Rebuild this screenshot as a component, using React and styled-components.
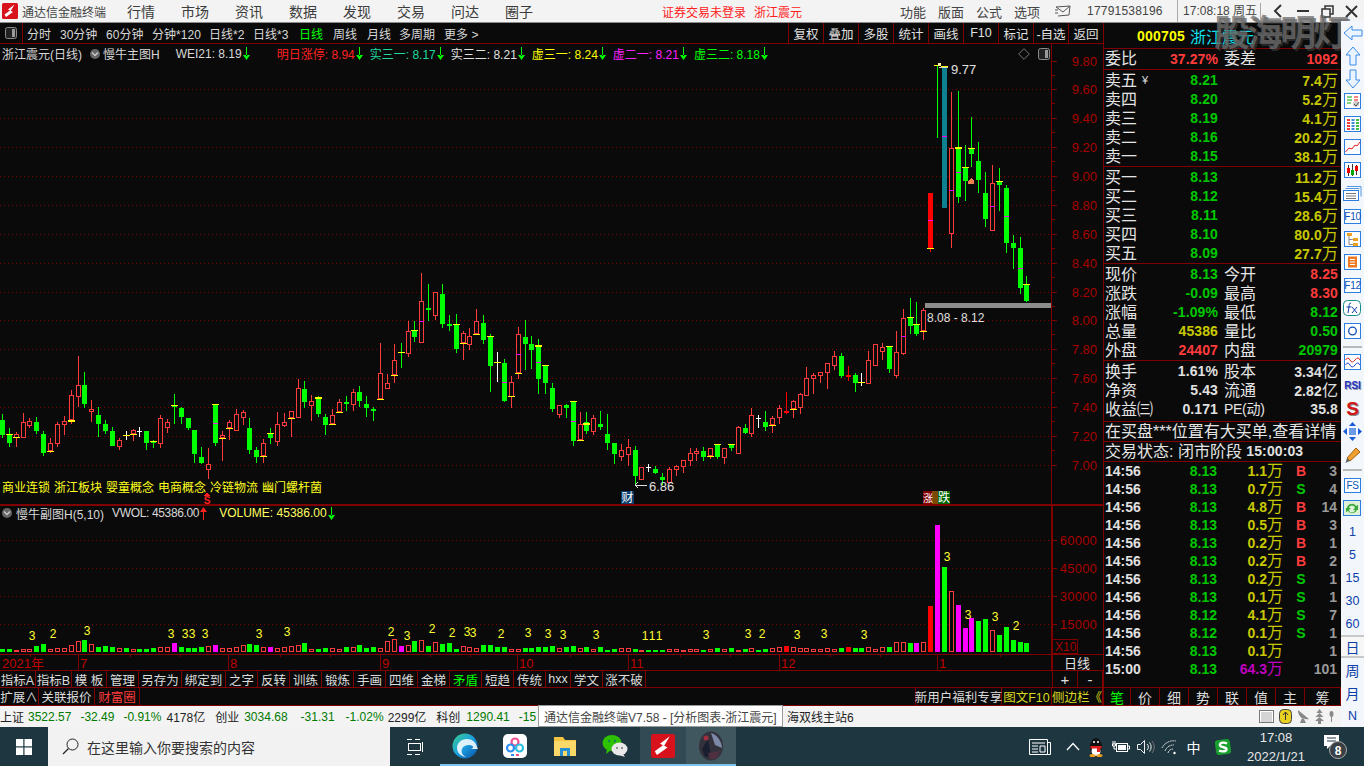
import React from 'react';
import styled, { createGlobalStyle } from 'styled-components';

const FONT = `"Liberation Sans","Noto Sans CJK SC",sans-serif`;
const LINE = '#800000';
const BG = '#0a0a0a';
const RED = '#ff3c3c';
const GREEN = '#00c800';
const OLIVE = '#c8c800';
const LIME = '#00ff00';

const Global = createGlobalStyle`
  html, body { margin: 0; padding: 0; background: ${BG}; overflow: hidden; }
  * { box-sizing: border-box; }
`;

/* ---------- chart data, read off the picture: [x, wickTop, wickBot, bodyTop, bodyBot, kind, yellow, magenta, thick] ---------- */
const partA = [
  [7,447,519,465,510,'g'],[28,489,545,506,534,'g',506],[49,501,546,508,518,'r',517],[70,444,518,472,518,'r'],
  [88,459,490,469,483,'r'],[109,456,507,471,498,'g'],[130,498,573,507,564,'g'],[151,519,564,534,559,'r',559],
  [172,472,546,477,537,'r'],[193,453,510,469,479,'r'],[214,375,477,391,465,'r',465,0,2],[235,273,426,361,395,'r'],
  [253,321,429,360,417,'g'],[274,405,471,432,441,'r'],[295,426,516,450,477,'g'],[316,465,507,477,498,'g'],
  [337,486,543,498,543,'g'],[358,519,555,525,545,'r'],[379,498,525,511,511,'w',511],[400,492,528,496,508,'r',508],
  [418,486,516,498,498,'w'],[439,498,555,498,534,'g'],[460,525,549,528,533,'g',528],[481,450,549,460,537,'r'],
  [502,462,504,472,488,'r'],[523,387,477,421,425,'g',421],[544,426,477,429,456,'g'],[565,459,495,459,489,'g'],
  [583,495,594,495,567,'g'],[604,546,597,576,594,'g'],[625,549,642,598,614,'r'],[646,418,543,418,534,'g',418,475],
  [667,498,588,511,520,'r',520],[688,465,525,472,490,'r',490],[709,432,498,447,497,'r'],[730,435,480,442,458,'r'],
  [748,459,567,489,555,'g'],[769,546,594,555,576,'g'],[790,522,594,534,574,'r',574],[811,489,537,505,519,'g',505],
  [832,441,543,478,530,'r'],[853,444,486,472,483,'r'],[874,438,516,439,460,'r',460],[895,342,459,370,458,'r'],
  [913,348,429,372,411,'g'],[934,390,468,409,423,'r'],[955,393,456,396,447,'g',396,0,2],[976,447,510,456,480,'g'],
  [997,432,480,450,478,'r',478],[1018,402,444,412,442,'r',442],[1039,393,438,411,417,'g'],[1060,372,438,381,419,'r'],
  [1078,363,426,381,408,'g'],[1099,393,456,417,429,'g'],[1120,426,468,432,438,'g'],[1141,234,405,325,403,'r',403],
  [1162,327,372,355,371,'r'],[1183,237,354,286,331,'r',331],[1204,234,309,261,263,'g',262],[1225,168,276,199,266,'r'],
  [1243,168,231,196,216,'g',196],[1264,24,234,109,233,'r',0,169],[1285,57,168,129,135,'g'],[1306,82,165,82,152,'r'],
  [1327,57,189,87,177,'g'],[1348,150,198,177,183,'g'],[1369,147,264,178,252,'g',178],[1390,198,285,205,235,'r',235],
];
const partB = [
  [28,189,255,214,240,'r'],[49,132,210,168,208,'r',208],[70,150,237,174,225,'g'],[91,207,381,214,303,'g',214],
  [112,261,351,292,292,'w',292],[133,282,411,294,408,'g',0,352],[154,333,429,351,395,'r',394],[175,186,342,208,325,'r',325,268],
  [196,165,315,216,237,'g'],[214,213,312,237,255,'g'],[235,222,387,240,342,'g',240,292,2],[256,300,387,301,354,'g',301],
  [277,354,441,369,432,'g'],[298,420,459,421,450,'r'],[319,417,459,420,429,'g'],[340,409,543,409,528,'g',409,468],
  [361,441,528,478,526,'r',526],[379,441,507,472,498,'g',473,0,2],[400,450,510,460,500,'r'],[421,438,495,477,486,'g'],
  [442,447,555,507,534,'g'],[463,534,597,534,567,'g'],[484,537,588,555,576,'r'],[505,522,603,546,570,'r'],
  [526,543,660,555,633,'g'],[544,606,645,607,644,'r'],[565,597,621,607,607,'w'],[586,603,627,612,624,'g'],
  [607,624,660,636,645,'g'],[628,606,654,613,653,'r'],[649,600,633,604,614,'r'],[670,585,624,586,606,'r'],
  [691,549,603,564,587,'r'],[709,549,588,559,567,'r'],[730,546,588,558,576,'g'],[751,549,582,550,574,'r',574],
  [772,537,582,540,576,'g',538],[793,549,597,550,578,'r'],[814,537,558,540,549,'g',538],[835,484,567,487,566,'r'],
  [856,477,507,489,504,'g'],[874,430,516,451,506,'r'],[895,450,489,460,460,'w'],[916,438,498,471,486,'g'],
  [937,453,504,460,481,'r',481],[958,420,477,429,460,'r'],[979,381,447,438,443,'R'],[1000,405,459,409,433,'r',433],
  [1021,384,447,388,428,'r'],[1039,306,393,340,392,'r'],[1060,324,387,331,341,'r'],[1081,321,354,322,334,'r'],
  [1102,294,372,295,325,'r'],[1123,258,315,274,302,'r'],[1144,264,339,273,333,'g'],[1165,303,348,330,335,'R'],
  [1186,324,381,330,354,'g'],[1204,324,363,350,350,'w',350],[1225,258,357,286,356,'r'],[1246,237,303,238,302,'r'],
  [1267,234,285,247,262,'r'],[1288,243,324,245,312,'g',244],[1309,198,339,262,332,'r'],[1330,132,270,160,266,'r',0,214],
  [1351,99,207,157,183,'g',157],[1369,111,213,176,207,'g',176],[1390,129,225,136,199,'r',199],
];
const partC = [
  [151,430,605,430,594,'R',594,511],[172,45,264,45,46,'g',45],[193,50,474,50,474,'T',48,259,2],[214,126,594,295,551,'r',0,421],
  [235,123,459,290,441,'g',290,367,2],[256,285,453,352,393,'g',352],[274,201,351,295,312,'g',295],[295,276,429,333,390,'g'],
  [316,366,531,429,507,'g'],[337,345,543,400,542,'r',0,469],[358,355,483,394,405,'g',394],[379,405,609,414,579,'g',0,498],
  [400,555,657,579,594,'g'],[421,561,732,594,714,'g',0,655],[439,678,756,703,753,'g',703],
];
const toScreen = (ox, oy) => ([x, wt, wb, bt, bb, kind, yellow, magenta, thick]) => ({
  x: Math.floor(x / 3 + ox), wt: Math.round(wt / 3 + oy), wb: Math.round(wb / 3 + oy),
  bt: Math.round(bt / 3 + oy), bb: Math.round(bb / 3 + oy), kind,
  yellow: yellow ? Math.round(yellow / 3 + oy) : 0, magenta: magenta ? Math.round(magenta / 3 + oy) : 0, thick: thick || 1,
});
const candles = [...partA.map(toScreen(0, 265)), ...partB.map(toScreen(460, 265)), ...partC.map(toScreen(880, 50))];

const volumes = [
  3,3,2,3,3,6,8,3,4,4,7,11,12,8,5,6,5,4,4,3,3,3,4,5,5,9,5,4,4,5,6,7,4,4,5,7,8,7,5,5,4,5,6,7,9,3,3,4,4,3,5,5,7,4,5,4,11,13,6,7,11,12,6,10,8,9,
  3,6,5,4,7,7,5,5,3,3,4,4,5,5,6,4,5,6,4,5,3,5,2,3,4,4,3,2,2,2,2,3,3,2,3,3,2,3,4,3,4,2,3,4,2,3,4,5,6,5,4,4,3,3,4,3,4,5,4,4,5,3,
  5,5,10,10,9,9,10,46,127,85,61,47,24,34,31,33,22,17,25,12,10,9,
];
const magentaBars = new Set([25, 31, 39, 58, 133, 136, 139, 140, 141]);

const priceLabels = ['9.80','9.60','9.40','9.20','9.00','8.80','8.60','8.40','8.20','8.00','7.80','7.60','7.40','7.20','7.00'];
const priceY = i => 60.5 + i * 28.88;
const volLabels = [['60000', 540], ['45000', 568], ['30000', 596], ['15000', 624]];
const months = [[78, '7'], [228, '8'], [380, '9'], [517, '10'], [628, '11'], [779, '12'], [937, '1']];
const volMarks = [
  [32,640,'3'],[53,638,'2'],[87,635,'3'],[171,638,'3'],[185,638,'3'],[192,638,'3'],[205,638,'3'],[259,638,'3'],[287,636,'3'],
  [391,636,'2'],[407,640,'3'],[432,633,'2'],[452,637,'2'],[467,636,'3'],[473,637,'3'],[501,638,'2'],[528,637,'3'],[548,638,'3'],
  [563,639,'3'],[596,639,'3'],[645,640,'1'],[652,640,'1'],[659,640,'1'],[706,639,'3'],[748,638,'3'],[762,638,'2'],[797,639,'3'],
  [824,638,'3'],[864,639,'3'],[947,561,'3'],[968,619,'3'],[995,621,'3'],[1016,630,'2'],
];

/* ---------- shell ---------- */
const Page = styled.div`
  width: 1364px; height: 766px; display: flex; flex-direction: column;
  font-family: ${FONT}; background: ${BG}; overflow: hidden; position: relative;
`;
const Watermark = styled.div`
  position: absolute; left: 1214px; top: 11px; font-size: 36px; letter-spacing: -3px; font-weight: 700; line-height: 46px;
  white-space: nowrap; color: rgba(110,110,110,.75); text-shadow: 2px 2px 0 rgba(60,60,60,.6); pointer-events: none;
`;
const TitleBar = styled.div`
  height: 23px; flex: none; display: flex; align-items: center; background: #f3f3f3;
  border-bottom: 1px solid #8c8c8c; padding-left: 2px; color: #444; overflow: hidden; white-space: nowrap;
  & > * { flex: none; }
`;
const AppName = styled.span` font-size: 12px; margin-left: 4px; width: 105px; `;
const MenuItem = styled.span` font-size: 14px; width: 54px; color: #3c3c3c; `;
const Alert = styled.span` font-size: 12px; color: #ff2020; margin-left: ${p => p.$ml}px; `;
const SysGroup = styled.div` display: flex; margin-left: 98px; `;
const SysItem = styled.span` font-size: 13px; color: #444; width: 38px; `;
const MailSlot = styled.span` display: flex; margin-left: 3px; `;
const Phone = styled.span` font-size: 12px; letter-spacing: .2px; color: #444; width: 90px; margin-left: 16px; `;
const Clock = styled.span` font-size: 12px; color: #444; border-left: 1px solid #aaa; width: 83px; padding-left: 5px; line-height: 22px; `;
const WinBtn = styled.span` width: 24.5px; display: flex; justify-content: center; align-items: center; `;
const WinBtns = styled.div` display: flex; border-left: 1px solid #aaa; padding-left: 5px; `;

const Work = styled.div` height: 704px; flex: none; display: flex; `;
const LeftStack = styled.div` width: 1341px; flex: none; display: flex; flex-direction: column; `;
const Terminal = styled.div` height: 683px; flex: none; display: flex; `;
const ChartColumn = styled.div` width: 1103px; flex: none; display: flex; flex-direction: column; `;

/* ---------- toolbar ---------- */
const Toolbar = styled.div`
  height: 21px; flex: none; display: flex; align-items: stretch; border-bottom: 1px solid ${LINE};
`;
const PanelToggle = styled.div`
  width: 23px; border-right: 1px solid ${LINE}; display: flex; align-items: center; justify-content: center;
`;
const PeriodGroup = styled.div` display: flex; align-items: center; padding-left: 4px; flex: 1; `;
const Period = styled.span`
  font-size: 12px; white-space: nowrap; color: ${p => (p.$on ? LIME : '#d8d8d8')}; margin-right: ${p => p.$mr}px;
`;
const ToolBtn = styled.span`
  width: 35px; border-left: 1px solid ${LINE}; color: #e0e0e0; font-size: 12.5px;
  display: flex; align-items: center; justify-content: center; white-space: nowrap;
`;

/* ---------- chart ---------- */
const Stage = styled.div` height: 627px; flex: none; position: relative; `;
const ChartSvg = styled.svg` display: block; font-family: ${FONT}; `;
const Legend = styled.div`
  position: absolute; left: 2px; top: 0; width: 1049px; height: 19px; display: flex; align-items: center;
  font-size: 12px; white-space: nowrap; color: #d8d8d8;
`;
const LegendItem = styled.span`
  display: inline-flex; align-items: center; gap: 1px; color: ${p => p.$color || '#d8d8d8'}; margin-left: ${p => p.$ml || 0}px;
  letter-spacing: ${p => p.$ls || 0}px;
`;
const LegendTools = styled.span` margin-left: auto; display: flex; align-items: center; gap: 8px; padding-right: 1px; `;
const ConceptRow = styled.div`
  position: absolute; left: 2px; top: 434px; display: flex; gap: 4px; color: #ffff20; font-size: 12px; white-space: nowrap;
`;
const VolLegend = styled(Legend)` top: 460px; height: 18px; width: auto; `;
const Circle = styled.span`
  width: 10px; height: 10px; border-radius: 50%; background: #666; display: inline-flex; align-items: center; justify-content: center;
`;

/* ---------- button rows ---------- */
const BtnRow = styled.div`
  height: 17px; flex: none; display: flex; border-bottom: 1px solid ${LINE}; 
`;
const ExtRow = styled(BtnRow)` height: 18px; `;
const FnBtn = styled.span`
  width: ${p => p.$w}px; flex: none; border-right: 1px solid ${LINE}; display: flex; align-items: center; justify-content: center;
  font-size: 12.5px; white-space: nowrap; color: ${p => p.$color || '#dcdcdc'};
`;
const Filler = styled.div` flex: 1; border-right: 1px solid ${LINE}; `;
const ZoomBtn = styled(FnBtn)` color: #e0e0e0; font-size: 15px; `;

/* ---------- quote panel ---------- */
const Panel = styled.div`
  width: 238px; flex: none; border-left: 1px solid ${LINE}; display: flex; flex-direction: column; color: #e4e4e4;
`;
const QuoteHead = styled.div`
  height: 26px; flex: none; display: flex; align-items: center; gap: 5px; padding-left: 33px; border-bottom: 1px solid ${LINE};
`;
const Code = styled.span` color: #ffff00; font-weight: 700; font-size: 14px; letter-spacing: .2px; `;
const StockName = styled.span` color: #10e0f0; font-size: 16px; `;
const Section = styled.div`
  flex: none; display: flex; flex-direction: column; padding: ${p => p.$pad || '1px 0 0'}; border-bottom: 1px solid ${LINE};
`;
const Row = styled.div`
  height: ${p => p.$h || 19}px; display: grid; grid-template-columns: 113px 114px; grid-template-rows: ${p => p.$h || 19}px;
  column-gap: 6px; padding-left: 1px; font-size: 16px; line-height: ${p => p.$h || 19}px;
`;
const Cell = styled.div` display: flex; justify-content: space-between; align-items: center; white-space: nowrap; `;
const Num = styled.b`
  font-size: 14px; color: ${p => p.$color || '#e0e0e0'}; margin-left: auto; letter-spacing: .1px;
`;
const Unit = styled.span` color: ${p => p.$color || '#e0e0e0'}; font-size: 16px; font-weight: 400; `;
const Tight = styled.span` font-size: 14px; letter-spacing: -.3px; `;
const Line = styled.div`
  height: 20px; flex: none; padding-left: 1px; border-bottom: 1px solid ${LINE}; font-size: 16px; display: flex; align-items: center;
  white-space: nowrap; color: #e4e4e4; line-height: 19px;
`;
const ClockNum = styled(Num)` margin-left: 0; `;
const Yen = styled.span` font-size: 11px; margin: 0 auto 0 5px; color: #ddd; `;
const Ticks = styled.div` flex: 1; display: flex; flex-direction: column; `;
const Tick = styled.div`
  height: 18px; flex: none; display: grid; grid-template-columns: 1px 34px 78px 66px 36px 18px; grid-template-rows: 18px; line-height: 18px;
  align-items: center; font-size: 14px; font-weight: 700;
`;
const TickTime = styled.span` color: #e0e0e0; grid-column: 2; `;
const TickPrice = styled.span` color: ${GREEN}; text-align: right; `;
const TickVol = styled.span` color: ${p => p.$color}; text-align: right; display: flex; justify-content: flex-end; align-items: center; `;
const TickSide = styled.span` color: ${p => (p.$s === 'B' ? RED : GREEN)}; text-align: center; `;
const TickCount = styled.span` color: #9a9a9a; text-align: right; white-space: nowrap; direction: rtl; `;
const Tabs = styled.div` height: 19px; flex: none; display: flex; border-top: 1px solid ${LINE}; border-bottom: 1px solid ${LINE}; `;
const Tab = styled.span`
  width: ${p => p.$w}px; flex: none; border-right: 1px solid ${LINE}; font-size: 14px; display: flex; align-items: center; justify-content: center;
  color: ${p => (p.$on ? LIME : '#dcdcdc')};
`;

/* ---------- status bar ---------- */
const StatusBar = styled.div`
  height: 21px; flex: none; background: #f3f3f3; display: flex; align-items: center; position: relative; font-size: 12px; color: #222; white-space: nowrap;
`;
const StatusText = styled.span` color: ${p => p.$color || '#222'}; margin-left: ${p => p.$ml}px; `;
const ServerName = styled.span` position: absolute; left: 787px; `;
const Tooltip = styled.div`
  position: absolute; left: 538px; top: -1px; width: 245px; height: 22px; background: #fff; border: 1px solid #9a9a9a; color: #444;
  font-size: 12px; display: flex; align-items: center; padding-left: 5px; z-index: 2;
`;
const StatusIcons = styled.div` margin-left: auto; display: flex; align-items: center; gap: 5px; padding-right: 7px; `;

/* ---------- side bar ---------- */
const Sidebar = styled.div`
  width: 23px; flex: none; background: #f3f6fb; display: flex; flex-direction: column; align-items: center; margin-top: -2px; z-index: 1;
`;
const Slot = styled.div`
  height: 23px; width: 23px; flex: none; display: flex; align-items: center; justify-content: center;
  color: #0c3fa8; font-size: ${p => (p.$cjk ? 14 : 12.5)}px;
  ${p => p.$on && 'background:#f7f7f7;border:1px solid #c8c8c8;border-width:2px 0;'}
`;
const SideRule = styled.div` height: 8px; width: 19px; flex: none; display: flex; align-items: center; &::after{content:'';width:100%;border-top:2px solid #b8b8b8;} `;
const FnBox = styled.span`
  border: 1px solid #2a7fe0; background: #fff; color: #0c4fb8; width: 17px; height: 15px; font-size: 10px; display: flex; align-items: center; justify-content: center; letter-spacing: -.3px;
`;
const Rsi = styled.span` font-weight: 700; font-size: 10px; color: #2233c0; text-shadow: 1px 1px 0 #99a; `;
const BigS = styled.span` font-weight: 700; font-size: 19px; color: #d01818; text-shadow: 1px 1px 0 #888; `;

/* ---------- task bar ---------- */
const Taskbar = styled.div` height: 39px; flex: none; background: #1e3640; display: flex; align-items: stretch; color: #fff; `;
const Start = styled.div` width: 48px; display: flex; align-items: center; justify-content: center; `;
const SearchBox = styled.div`
  width: 342px; background: #f2f2f2; color: #333; font-size: 14px; display: flex; align-items: center; gap: 8px; padding-left: 14px;
`;
const TaskBtn = styled.div`
  width: ${p => p.$w || 50}px; display: flex; align-items: center; justify-content: center; position: relative;
  background: ${p => p.$bg || 'transparent'};
  ${p => p.$open && 'border-bottom: 2px solid #7cc4ee;'}
`;
const Tray = styled.div` margin-left: auto; display: flex; align-items: center; padding-right: 6px; `;
const TraySlot = styled.div` width: ${p => p.$w}px; display: flex; align-items: center; justify-content: center; font-size: 14px; `;
const TrayClock = styled.div` width: 72px; text-align: center; font-size: 13px; line-height: 19px; color: #e8e8e8; `;

/* ---------- icons ---------- */
const TdxLogo = ({ size = 16 }) => (
  <svg width={size} height={size} viewBox="0 0 16 16">
    <rect width="16" height="16" rx="1.5" fill="#d8121c" />
    <path d="M12.5 1.5 L6 6.5 L8 7.5 L2.5 11.5 L4 14 L11 9 L8.8 7.8 Z" fill="#fff" />
  </svg>
);
const Mail = () => (
  <svg width="16" height="12" viewBox="0 0 16 12"><path d="M1 2 L15 1 L14 10 L3 11 M1 2 L8 7 L15 1 M0 5h3M0 8h3" fill="none" stroke="#555" /></svg>
);
const Arrow = ({ up, color = LIME }) => (
  <svg width="7" height="13" viewBox="0 0 7 13">
    {up ? <path d="M3 3h1v10H3z M0 5 L3.5 0 L7 5z" fill={color} /> : <path d="M3 0h1v9H3z M0 8 L3.5 13 L7 8z" fill={color} />}
  </svg>
);
const Toggle = () => (
  <svg width="12" height="12" viewBox="0 0 12 12">
    <rect x=".5" y=".5" width="11" height="11" rx="2" fill="#222" stroke="#8a8a8a" /><rect x="7" y="2" width="3" height="8" fill="#9a9a9a" />
  </svg>
);
const Chev = () => <svg width="8" height="8" viewBox="0 0 8 8"><path d="M1 2.5 L4 5.5 L7 2.5" fill="none" stroke="#ccc" strokeWidth="1.3" /></svg>;
const Diamond = () => <svg width="12" height="12" viewBox="0 0 12 12"><path d="M6 .7 L11.3 6 L6 11.3 L.7 6z" fill="none" stroke="#777" /></svg>;

const boxFrame = '#2a7fe0';
const IconBox = ({ children }) => (
  <svg width="18" height="17" viewBox="0 0 18 17"><rect x=".5" y=".5" width="16" height="15" fill="#fff" stroke={boxFrame} />{children}</svg>
);
const ArrowLeft = () => <svg width="20" height="16" viewBox="0 0 20 16"><path d="M1 8 L9 1 V5 H19 V11 H9 V15z" fill="#eaf4ff" stroke="#3c8ce7" /></svg>;
const ArrowUp = () => <svg width="16" height="20" viewBox="0 0 16 20"><path d="M8 1 L15 9 H11 V19 H5 V9 H1z" fill="#eaf4ff" stroke="#3c8ce7" /></svg>;
const ArrowDown = () => <svg width="16" height="20" viewBox="0 0 16 20"><path d="M8 19 L15 11 H11 V1 H5 V11 H1z" fill="#eaf4ff" stroke="#3c8ce7" /></svg>;
const SideIcons = {
  table: <IconBox><path d="M3 4h5M3 7h5M3 10h4" stroke="#0a0" /><path d="M10 4h4M10 7h4" stroke="#e00" /><circle cx="12" cy="11" r="3" fill="#ccc" /><path d="M10 11l2 2 3-4" stroke="#555" fill="none" /></IconBox>,
  grid: <IconBox><path d="M3 4h3M3 7h3M3 10h3M3 13h3" stroke="#e00" strokeWidth="1.5" /><path d="M7.5 4h3M7.5 7h3M7.5 10h3M7.5 13h3" stroke="#06c" strokeWidth="1.5" /><path d="M12 4h3M12 7h3M12 10h3M12 13h3" stroke="#0a0" strokeWidth="1.5" /></IconBox>,
  line: <IconBox><path d="M1.5 13 L5 9 L8 10 L11 6 L13 7 L16 3" stroke="#e02020" fill="none" /></IconBox>,
  candle: <IconBox><path d="M4.5 3v11M8.5 2v12M12.5 3v10" stroke="#333" /><rect x="3" y="6" width="3" height="5" fill="#e00" /><rect x="7" y="8" width="3" height="5" fill="#0a0" /><rect x="11" y="4" width="3" height="5" fill="#e00" /></IconBox>,
  stack: <svg width="19" height="17" viewBox="0 0 19 17"><path d="M4 1.5h14v10" fill="none" stroke="#5a9ae0" /><path d="M2.5 3.5h14" fill="none" stroke="#5a9ae0" /><rect x=".5" y="5.5" width="15" height="10" fill="#fff" stroke="#2a7fe0" /><path d="M3 8.5h10M3 11h10M3 13.5h10" stroke="#777" /></svg>,
  org: <IconBox><rect x="3" y="2" width="5" height="3" fill="#f0a020" /><rect x="9" y="7" width="5" height="3" fill="#f0a020" /><rect x="9" y="12" width="5" height="3" fill="#f0a020" /><path d="M5 5v8.500h4M5 8.500h4" stroke="#888" fill="none" /></IconBox>,
  note: <IconBox><rect x="4" y="2.500" width="9" height="11" fill="#f07820" /><path d="M6 5.500h5M6 8h5M6 10.500h5" stroke="#fff" /></IconBox>,
  fx: <svg width="19" height="17" viewBox="0 0 19 17"><rect x=".5" y=".5" width="17" height="15" rx="4" fill="#fff" stroke="#178a8a" /><path d="M8 3 C6 3 6 5 6 7 L5 13 M3.500 7h5M9 7l5 6M14 7l-5 6" stroke="#0c3fa8" fill="none" /></svg>,
  ring: <IconBox><circle cx="8.500" cy="8" r="3.800" fill="none" stroke="#0c4fb8" strokeWidth="1.300" /></IconBox>,
  wave: <IconBox><path d="M1.500 6 Q4 2 6 6 T11 6 T16 6" stroke="#e02020" fill="none" /><path d="M1.500 11 Q4 7 6 11 T11 11 T16 11" stroke="#2040d0" fill="none" /></IconBox>,
  move: <svg width="19" height="19" viewBox="0 0 19 19" fill="#1a5ad8"><path d="M9.500 0l3.500 4h-7zM9.500 19l3.500-4h-7zM0 9.500l4-3.500v7zM19 9.500l-4-3.500v7z" /><rect x="6" y="6" width="7" height="7" fill="#6a9ae8" /></svg>,
  pencil: <svg width="18" height="18" viewBox="0 0 18 18"><path d="M3 12 L12 2 L16 6 L6 15z" fill="#f0a030" stroke="#a06010" /><path d="M3 12 L1.500 17 L6 15z" fill="#666" /></svg>,
  refresh: <svg width="19" height="17" viewBox="0 0 19 17"><rect x=".5" y=".5" width="17" height="15" fill="#dff0d8" stroke="#2a7fe0" /><path d="M4 8a5 5 0 0 1 9-2l2-1v5h-5l2-2a3 3 0 0 0-6 1z M14 9a5 5 0 0 1-9 2l-2 1v-4h5l-2 2a3 3 0 0 0 6-1z" fill="#38a838" /></svg>,
};
const WinLogo = () => <svg width="16" height="16" viewBox="0 0 16 16" fill="#fff"><rect width="7.300" height="7.300" /><rect x="8.500" width="7.500" height="7.300" /><rect y="8.500" width="7.300" height="7.500" /><rect x="8.500" y="8.500" width="7.500" height="7.500" /></svg>;
const Magnifier = () => <svg width="17" height="17" viewBox="0 0 17 17"><circle cx="10.500" cy="6.500" r="5.500" fill="none" stroke="#222" /><path d="M6.500 10.500 L1 16" stroke="#222" strokeWidth="1.200" /></svg>;
const TaskView = () => <svg width="18" height="18" viewBox="0 0 18 18" fill="none" stroke="#fff"><rect x="2.500" y="5.500" width="12" height="7" /><path d="M1 1.500h5M1 16.500h5M9 1.500h5M9 16.500h5M16.500 4v10" /></svg>;
const Edge = () => (
  <svg width="26" height="26" viewBox="0 0 26 26">
    <defs><linearGradient id="eg" x1="0" y1="0" x2="1" y2="1"><stop offset="0" stopColor="#3bd08a" /><stop offset=".5" stopColor="#1aa0e0" /><stop offset="1" stopColor="#0a4fa8" /></linearGradient></defs>
    <circle cx="13" cy="13" r="12.500" fill="url(#eg)" />
    <path d="M25 14c-1-5-5-8-10-8-6 0-10 4-10 9 0 3 2 8 9 9-4-2-5-5-4-8 1-3 4-4 7-4 3 0 4 1 4 2 0 1-1 2-3 2h8z" fill="#fff" fillOpacity=".85" />
  </svg>
);
const Netdisk = () => (
  <svg width="24" height="24" viewBox="0 0 24 24" fill="none" strokeWidth="2.200">
    <rect width="24" height="24" rx="5" fill="#fff" stroke="none" />
    <circle cx="12" cy="8" r="3.500" stroke="#f05090" /><circle cx="7.500" cy="14" r="3.500" stroke="#2a8ff0" /><circle cx="16.500" cy="14" r="3.500" stroke="#2ac0e0" />
    <rect x="8" y="20" width="3" height="2" fill="#2a8ff0" stroke="none" /><rect x="13" y="20" width="3" height="2" fill="#f05090" stroke="none" />
  </svg>
);
const Folder = () => <svg width="24" height="22" viewBox="0 0 24 22"><path d="M1 2h9l2 3h11v16H1z" fill="#f5c542" /><rect x="1" y="6" width="22" height="15" fill="#fbd968" /><path d="M7 21v-8h10v8h-3v-5h-4v5z" fill="#2a8fd0" /></svg>;
const Wechat = () => (
  <svg width="26" height="24" viewBox="0 0 26 24">
    <ellipse cx="10" cy="9" rx="9.500" ry="8" fill="#2dc100" /><path d="M5 15 L4 20 L9 16z" fill="#2dc100" />
    <ellipse cx="17.500" cy="15" rx="8" ry="6.500" fill="#e8e8e8" /><path d="M21 20 L23 23 L17 21z" fill="#e8e8e8" />
    <circle cx="7" cy="7" r="1.200" fill="#185" /><circle cx="13" cy="7" r="1.200" fill="#185" /><circle cx="15" cy="14" r="1" fill="#777" /><circle cx="20" cy="14" r="1" fill="#777" />
  </svg>
);
const Avatar = () => (
  <svg width="26" height="30" viewBox="0 0 26 30">
    <ellipse cx="13" cy="15" rx="12" ry="14.500" fill="#33323c" /><path d="M13 2 C18 3 24 10 24 17 L17 14z" fill="#7d89a8" /><path d="M4 18 L10 8 L13 25 L7 26z" fill="#1a1f30" /><circle cx="8" cy="7" r="2.500" fill="#a03040" /><path d="M10 22 L22 20 L18 28 L12 28z" fill="#503040" />
  </svg>
);
const News = () => <svg width="24" height="20" viewBox="0 0 24 20" fill="none" stroke="#fff"><path d="M1.500 2.500h18v15h-18zM19.500 5.500h3v12h-3" /><path d="M4 6h13M4 9h6M4 12h6M4 15h6M12 9h5v6h-5z" /></svg>;
const Caret = () => <svg width="14" height="9" viewBox="0 0 14 9"><path d="M1 8 L7 1.500 L13 8" fill="none" stroke="#fff" strokeWidth="1.300" /></svg>;
const Penguin = () => (
  <svg width="16" height="20" viewBox="0 0 16 20">
    <ellipse cx="8" cy="10" rx="6" ry="9" fill="#111" /><ellipse cx="8" cy="14" rx="4.500" ry="5" fill="#fff" /><rect x="2.500" y="9" width="11" height="2.500" fill="#e02020" /><path d="M9 11h3v4H9z" fill="#e02020" />
    <ellipse cx="4.500" cy="18.500" rx="3" ry="1.500" fill="#f5a020" /><ellipse cx="11.500" cy="18.500" rx="3" ry="1.500" fill="#f5a020" /><circle cx="6" cy="5" r="1" fill="#fff" /><circle cx="10" cy="5" r="1" fill="#fff" />
  </svg>
);
const Battery = () => <svg width="18" height="14" viewBox="0 0 18 14" fill="none" stroke="#fff"><rect x="4.500" y="3.500" width="11" height="8" /><rect x="6" y="5" width="8" height="5" fill="#fff" stroke="none" /><path d="M15.500 6h2v3h-2M1 1v3M3 1v3M.5 4h3v2h-3zM2 6v3h2" /></svg>;
const Speaker = () => <svg width="20" height="16" viewBox="0 0 20 16" fill="none" stroke="#eee"><path d="M1.500 5.500h3l4-4v13l-4-4h-3z" /><path d="M11 5a4 4 0 0 1 0 6M13.500 3.500a7 7 0 0 1 0 9" /><path d="M16 2a9 9 0 0 1 0 12" stroke="#777" /></svg>;
const Wifi = () => <svg width="18" height="16" viewBox="0 0 18 16" fill="none" stroke="#ddd" strokeDasharray="2 .6"><path d="M1 9 A13 13 0 0 1 15 2" /><path d="M4 12 A9 9 0 0 1 13 6" /><path d="M7 14 A5 5 0 0 1 12 10" /><circle cx="13.500" cy="14" r="1.200" fill="#fff" stroke="none" /></svg>;
const SogouS = () => (
  <svg width="18" height="18" viewBox="0 0 18 18"><rect x="1.500" y="1.500" width="15" height="15" rx="3" fill="#1aa02c" transform="rotate(-8 9 9)" /><path d="M13 5.500 C9 3.500 5 5 6 7.500 C7 10 12 8.500 12.500 11 C13 13.500 8 14 5 12.500" fill="none" stroke="#fff" strokeWidth="2.300" /></svg>
);
const Notify = () => (
  <svg width="26" height="28" viewBox="0 0 26 28">
    <path d="M2 2h15v11H8l-3 3v-3H2z" fill="#fff" /><path d="M5 5h9M5 8h9" stroke="#1e3640" />
    <circle cx="16" cy="17" r="8.500" fill="#3a3f45" stroke="#aaa" /><text x="16" y="21.500" fontSize="12" fontWeight="700" fill="#fff" textAnchor="middle" fontFamily={FONT}>8</text>
  </svg>
);
const StatusList = () => <svg width="15" height="13" viewBox="0 0 15 13"><rect x=".5" y=".5" width="14" height="12" fill="#fff" stroke="#777" /><path d="M2 3h11M2 5h11M2 7h11M2 9h11M2 11h11" stroke="#aaa" /></svg>;
const StatusCoin = () => <svg width="13" height="15" viewBox="0 0 13 15"><rect x=".5" y=".5" width="12" height="14" rx="4" fill="#e8d020" stroke="#444" /><path d="M6.500 3v8M4 6l2.500-3L9 6" stroke="#333" fill="none" /></svg>;
const StatusDish = () => <svg width="13" height="15" viewBox="0 0 13 15" fill="#888"><path d="M1 1 C1 8 6 11 12 10z" /><path d="M5 9 L3 14 H9 L7 10z" /></svg>;
const StatusTree = () => <svg width="9" height="15" viewBox="0 0 9 15" fill="#888"><path d="M4.500 0l3 4h-6zM4.500 4l4 4h-8zM4.500 8l4.500 4H0z" /><rect x="3" y="12" width="3" height="3" /></svg>;
const StatusPin = () => <svg width="5" height="12" viewBox="0 0 5 12" fill="#888"><ellipse cx="2.500" cy="3" rx="2" ry="3" /><rect x="2" y="6" width="1" height="5" /></svg>;

/* ---------- chart drawing ---------- */
const WICK = { g: LIME, r: RED, R: '#ff0000', T: '#0e8090', w: '#ffffff' };
const Candle = ({ c }) => {
  const color = WICK[c.kind];
  const h = Math.max(c.bb - c.bt, 1);
  return (
    <g>
      <rect x={c.x} y={c.wt} width="1" height={c.wb - c.wt} fill={c.kind === 'T' ? 'none' : color} />
      {c.kind === 'w' && <rect x={c.x - 2} y={c.bt} width="5" height="1" fill={color} />}
      {(c.kind === 'g' || c.kind === 'R' || c.kind === 'T') && <rect x={c.x - 2} y={c.bt} width="5" height={h} fill={color} />}
      {c.kind === 'r' && <rect x={c.x - 1.5} y={c.bt + 0.5} width="4" height={Math.max(h - 1, 1)} fill={BG} stroke={RED} />}
      {c.magenta > 0 && <rect x={c.x - 2} y={c.magenta} width="5" height="1" fill="#ff00ff" />}
      {c.yellow > 0 && <rect x={c.x - 3} y={c.yellow} width="7" height={c.thick} fill="#ffff00" />}
    </g>
  );
};
const VolBar = ({ c, h, magenta }) => {
  const top = 652 - Math.round(h);
  if (magenta) return <rect x={c.x - 2} y={top} width="5" height={h} fill="#ff00ff" />;
  if (c.kind === 'r') return <rect x={c.x - 1.5} y={top + 0.5} width="4" height={h - 1} fill={BG} stroke={RED} />;
  if (c.kind === 'R') return <rect x={c.x - 2} y={top} width="5" height={h} fill="#ff0000" />;
  return <rect x={c.x - 2} y={top} width="5" height={h} fill={LIME} />;
};

const Chart = () => (
  <ChartSvg width="1103" height="627" viewBox="0 44 1103 627" shapeRendering="crispEdges">
    {priceLabels.slice(1).map((l, i) => (
      <line key={l} x1="0" x2="1051" y1={Math.round(priceY(i + 1)) + 0.5} y2={Math.round(priceY(i + 1)) + 0.5} stroke={LINE} strokeDasharray="1 3" />
    ))}
    {volLabels.map(([l, y]) => <line key={l} x1="0" x2="1051" y1={y + 0.5} y2={y + 0.5} stroke={LINE} strokeDasharray="1 3" />)}
    <rect x="0" y="504" width="1103" height="2" fill={LINE} />
    <rect x="1051" y="44" width="1" height="461" fill={LINE} />
    <rect x="1051" y="505" width="2" height="166" fill={LINE} />
    <rect x="0" y="654" width="1103" height="1" fill={LINE} />
    <rect x="0" y="670" width="1103" height="1" fill={LINE} />
    {priceLabels.map((l, i) => {
      const y = Math.round(priceY(i));
      return (
        <g key={l}>
          <rect x="1052" y={y} width="5" height="1" fill={LINE} />
          {i < 14 && <rect x="1052" y={y + 14} width="3" height="1" fill={LINE} />}
          <text x="1097" y={y + 5} textAnchor="end" fontSize="13" fill="#a80000" shapeRendering="auto">{l}</text>
        </g>
      );
    })}
    {volLabels.map(([l, y]) => (
      <g key={l}>
        <rect x="1052" y={y} width="5" height="1" fill={LINE} />
        <text x="1097" y={y + 5} textAnchor="end" fontSize="13" letterSpacing=".2" fill="#a80000">{l}</text>
      </g>
    ))}
    <rect x="1052.500" y="639.500" width="25" height="14" fill="none" stroke={LINE} />
    <text x="1055" y="651" fontSize="12" fill="#a80000">X10</text>
    <text x="1077" y="668" fontSize="13" fill="#e0e0e0" textAnchor="middle">日线</text>

    {candles.map((c, i) => <Candle key={i} c={c} />)}
    {candles.map((c, i) => volumes[i] && <VolBar key={i} c={c} h={volumes[i]} magenta={magentaBars.has(i)} />)}

    <rect x="925" y="303" width="126" height="5" fill="#8c8c8c" />
    <text x="927" y="322" fontSize="12" fill="#e0e0e0">8.08 - 8.12</text>
    <path d="M939 67h9" stroke="#d0d0d0" />
    <rect x="938" y="63" width="3" height="3" fill="#fff0a0" />
    <text x="951" y="74" fontSize="13" fill="#e0e0e0">9.77</text>
    <path d="M968 184 V181 L971 178 L974 181 V184z" fill="#f08050" />
    <path d="M635 485h12" stroke="#e0e0e0" />
    <path d="M638 482 L635 485 L638 488" fill="none" stroke="#e0e0e0" />
    <text x="649" y="491" fontSize="13" fill="#e0e0e0">6.86</text>

    <path d="M204 496 L207 492 L210 496z" fill="#ff2020" />
    <text x="207" y="504" fontSize="10" fontWeight="700" fill="#ff2020" textAnchor="middle">S</text>
    <rect x="621" y="491" width="13" height="13" fill="#0a3d6b" />
    <text x="627.500" y="502" fontSize="12" fill="#fff" textAnchor="middle">财</text>
    <rect x="923" y="491" width="9" height="13" fill="#800000" />
    <rect x="932" y="491" width="6" height="13" fill="#7a4a00" />
    <rect x="938" y="491" width="12" height="13" fill="#006400" />
    <text x="923" y="502" fontSize="10" fill="#fff">涨</text>
    <text x="938" y="502" fontSize="12" fill="#fff">跌</text>

    {volMarks.map(([x, y, t], i) => (
      <text key={i} x={x} y={y} fontSize="12" fill="#ffff30" textAnchor="middle">{t}</text>
    ))}

    <text x="2" y="668" fontSize="13" fill="#c00000">2021年</text>
    {months.map(([x, t]) => (
      <g key={t + x}>
        <rect x={x} y="655" width="1" height="15" fill={LINE} />
        <text x={x + 2} y="668" fontSize="13" fill="#c00000">{t}</text>
      </g>
    ))}
    {[30, 130, 180, 280, 330, 430, 470, 570, 680, 730, 830, 880, 1000].map(x => <rect key={x} x={x} y="655" width="1" height="2" fill={LINE} />)}
  </ChartSvg>
);

/* ---------- page data ---------- */
const periods = [['分时', 9], ['30分钟', 8.7], ['60分钟', 8.7], ['分钟*120', 8.3], ['日线*2', 8.6], ['日线*3', 10.6], ['日线', 10, true], ['周线', 10], ['月线', 8], ['多周期', 9], ['更多 >', 0]];
const tools = ['复权', '叠加', '多股', '统计', '画线', 'F10', '标记', '-自选', '返回'];
const legendItems = [
  ['明日涨停: 8.94', '#ff2020', 27], ['实三一: 8.17', '#20d8a0', 7], ['实三二: 8.21', '#e0e0e0', 7],
  ['虚三一: 8.24', '#ffff00', 7], ['虚二一: 8.21', '#ff20ff', 7], ['虚三二: 8.18', '#00ff00', 7],
];
const concepts = ['商业连锁', '浙江板块', '婴童概念', '电商概念', '冷链物流', '幽门螺杆菌'];
const fnButtons = [['指标A', 36], ['指标B', 36], ['模 板', 35], ['管理', 32], ['另存为', 43], ['绑定到', 44], ['之字', 32], ['反转', 32], ['训练', 32], ['锻炼', 32], ['手画', 32], ['四维', 32], ['金梯', 32], ['矛盾', 32, LIME], ['短趋', 32], ['传统', 32], ['hxx', 25], ['学文', 32], ['涨不破', 43]];
const sells = [['卖五', '8.21', '7.4', true], ['卖四', '8.20', '5.2'], ['卖三', '8.19', '4.1'], ['卖二', '8.16', '20.2'], ['卖一', '8.15', '38.1']];
const buys = [['买一', '8.13', '11.2'], ['买二', '8.12', '15.4'], ['买三', '8.11', '28.6'], ['买四', '8.10', '80.0'], ['买五', '8.09', '27.7']];
const stats = [
  ['现价', '8.13', GREEN, '今开', '8.25', RED], ['涨跌', '-0.09', GREEN, '最高', '8.30', RED], ['涨幅', '-1.09%', GREEN, '最低', '8.12', GREEN],
  ['总量', '45386', OLIVE, '量比', '0.50', GREEN], ['外盘', '24407', RED, '内盘', '20979', GREEN],
];
const ticks = [
  ['14:56','8.13','1.1','B','3'],['14:56','8.13','0.7','S','4'],['14:56','8.13','4.8','B','14'],['14:56','8.13','0.5','B','3'],
  ['14:56','8.13','0.2','B','1'],['14:56','8.13','0.2','B','2'],['14:56','8.13','0.2','S','1'],['14:56','8.13','0.1','S','1'],
  ['14:56','8.12','4.1','S','7'],['14:56','8.12','0.1','S','1'],['14:56','8.13','0.1','','1'],['15:00','8.13','64.3','','101'],
];
const tabs = [['笔', 27, true], ['价', 29], ['细', 29], ['势', 29], ['联', 29], ['值', 29], ['主', 29], ['筹', 36]];
const statusItems = [
  ['上证', '#222', 0], ['3522.57', '#007a00', 4], ['-32.49', '#007a00', 9], ['-0.91%', '#007a00', 9], ['4178亿', '#222', 5],
  ['创业', '#222', 10], ['3034.68', '#007a00', 5], ['-31.31', '#007a00', 13], ['-1.02%', '#007a00', 11], ['2299亿', '#222', 4],
  ['科创', '#222', 10], ['1290.41', '#007a00', 6], ['-15', '#007a00', 9],
];

const Slots1 = ['table', 'grid', 'line', 'candle', 'stack'];

const App = () => (
  <Page>
    <Global />
    <TitleBar>
      <TdxLogo />
      <AppName>通达信金融终端</AppName>
      {['行情', '市场', '资讯', '数据', '发现', '交易', '问达', '圈子'].map(m => <MenuItem key={m}>{m}</MenuItem>)}
      <Alert $ml={103}>证券交易未登录</Alert>
      <Alert $ml={8}>浙江震元</Alert>
      <SysGroup>{['功能', '版面', '公式', '选项'].map(m => <SysItem key={m}>{m}</SysItem>)}</SysGroup>
      <MailSlot><Mail /></MailSlot>
      <Phone>17791538196</Phone>
      <Clock>17:08:18 周五</Clock>
      <WinBtns>
        <WinBtn><svg width="10" height="16" viewBox="0 0 10 16"><path d="M8 2 L2 8 L8 14" fill="none" stroke="#333" strokeWidth="2" /></svg></WinBtn>
        <WinBtn><svg width="12" height="4" viewBox="0 0 12 4"><rect y="1" width="12" height="2" fill="#333" /></svg></WinBtn>
        <WinBtn><svg width="13" height="13" viewBox="0 0 13 13" fill="none" stroke="#333" strokeWidth="1.500"><rect x="1" y="4" width="8" height="8" /><path d="M4 4V1h8v8H9" /></svg></WinBtn>
        <WinBtn><svg width="13" height="13" viewBox="0 0 13 13"><path d="M1 1 L12 12 M12 1 L1 12" stroke="#333" strokeWidth="2" /></svg></WinBtn>
      </WinBtns>
    </TitleBar>

    <Work>
      <LeftStack>
        <Terminal>
          <ChartColumn>
            <Toolbar>
              <PanelToggle><Toggle /></PanelToggle>
              <PeriodGroup>
                {periods.map(([t, mr, on]) => <Period key={t} $mr={mr} $on={on}>{t}</Period>)}
              </PeriodGroup>
              {tools.map(t => <ToolBtn key={t}>{t}</ToolBtn>)}
            </Toolbar>
            <Stage>
              <Chart />
              <Legend>
                <LegendItem>浙江震元(日线)</LegendItem>
                <LegendItem $ml={8}><Circle><Chev /></Circle></LegendItem>
                <LegendItem $ml={3}>慢牛主图H</LegendItem>
                <LegendItem $ml={16}>WEI21: 8.19<Arrow /></LegendItem>
                {legendItems.map(([t, c, ml]) => <LegendItem key={t} $color={c} $ml={ml}>{t}<Arrow /></LegendItem>)}
                <LegendTools><Diamond /><Toggle /></LegendTools>
              </Legend>
              <ConceptRow>{concepts.map(c => <span key={c}>{c}</span>)}</ConceptRow>
              <VolLegend>
                <LegendItem><Circle><Chev /></Circle></LegendItem>
                <LegendItem $ml={4}>慢牛副图H(5,10)</LegendItem>
                <LegendItem $ml={8} $ls={-0.35}>VWOL: 45386.00<Arrow up color="#ff2020" /></LegendItem>
                <LegendItem $ml={12} $color="#ffff60">VOLUME: 45386.00<Arrow /></LegendItem>
              </VolLegend>
            </Stage>
            <BtnRow>
              {fnButtons.map(([t, w, c]) => <FnBtn key={t} $w={w} $color={c}>{t}</FnBtn>)}
              <Filler />
              <ZoomBtn $w={25}>+</ZoomBtn>
              <ZoomBtn $w={25}>-</ZoomBtn>
            </BtnRow>
            <ExtRow>
              <FnBtn $w={39}>扩展∧</FnBtn>
              <FnBtn $w={56}>关联报价</FnBtn>
              <FnBtn $w={45} $color="#ff3c3c">财富圈</FnBtn>
              <Filler />
              <FnBtn $w={86}>新用户福利专享</FnBtn>
              <FnBtn $w={50} $color="#d8d820">图文F10</FnBtn>
              <FnBtn $w={51} $color="#d8d820">侧边栏《</FnBtn>
            </ExtRow>
          </ChartColumn>

          <Panel>
            <QuoteHead><Code>000705</Code><StockName>浙江震元</StockName></QuoteHead>
            <Section $pad="0">
              <Row $h={20}>
                <Cell>委比<Num $color={RED}>37.27%</Num></Cell>
                <Cell>委差<Num $color={RED}>1092</Num></Cell>
              </Row>
            </Section>
            {[sells, buys].map((group, g) => (
              <Section key={g}>
                {group.map(([l, p, v, yen]) => (
                  <Row key={l}>
                    <Cell>{l}{yen && <Yen>¥</Yen>}<Num $color={GREEN}>{p}</Num></Cell>
                    <Cell><Num $color={OLIVE}>{v}<Unit $color={OLIVE}>万</Unit></Num></Cell>
                  </Row>
                ))}
              </Section>
            ))}
            <Section>
              {stats.map(([l, v, c, l2, v2, c2]) => (
                <Row key={l}>
                  <Cell>{l}<Num $color={c}>{v}</Num></Cell>
                  <Cell>{l2}<Num $color={c2}>{v2}</Num></Cell>
                </Row>
              ))}
            </Section>
            <Section $pad="1px 0 2px">
              <Row><Cell>换手<Num>1.61%</Num></Cell><Cell>股本<Num>3.34<Unit>亿</Unit></Num></Cell></Row>
              <Row><Cell>净资<Num>5.43</Num></Cell><Cell>流通<Num>2.82<Unit>亿</Unit></Num></Cell></Row>
              <Row><Cell>收益㈢<Num>0.171</Num></Cell><Cell><Tight>PE(动)</Tight><Num>35.8</Num></Cell></Row>
            </Section>
            <Line>在买盘***位置有大买单,查看详情</Line>
            <Line>交易状态: 闭市阶段&nbsp;<ClockNum>15:00:03</ClockNum></Line>
            <Ticks>
              {ticks.map(([t, p, v, s, n], i) => (
                <Tick key={i}>
                  <TickTime>{t}</TickTime>
                  <TickPrice>{p}</TickPrice>
                  <TickVol $color={t === '15:00' ? '#c000c0' : OLIVE}>{v}<Unit $color={t === '15:00' ? '#c000c0' : OLIVE}>万</Unit></TickVol>
                  <TickSide $s={s}>{s}</TickSide>
                  <TickCount>{n}</TickCount>
                </Tick>
              ))}
            </Ticks>
            <Tabs>{tabs.map(([t, w, on]) => <Tab key={t} $w={w} $on={on}>{t}</Tab>)}</Tabs>
          </Panel>
        </Terminal>

        <StatusBar>
          {statusItems.map(([t, c, ml], i) => <StatusText key={i} $color={c} $ml={ml}>{t}</StatusText>)}
          <ServerName>海双线主站6</ServerName>
          <Tooltip>通达信金融终端V7.58 - [分析图表-浙江震元]</Tooltip>
          <StatusIcons><StatusList /><StatusCoin /><StatusDish /><StatusTree /><StatusPin /></StatusIcons>
        </StatusBar>
      </LeftStack>

      <Sidebar>
        <Slot><ArrowLeft /></Slot>
        <Slot><ArrowUp /></Slot>
        <Slot><ArrowDown /></Slot>
        {Slots1.map(k => <Slot key={k}>{SideIcons[k]}</Slot>)}
        <Slot><FnBox>F10</FnBox></Slot>
        <Slot>{SideIcons.org}</Slot>
        <Slot>{SideIcons.note}</Slot>
        <Slot><FnBox>F12</FnBox></Slot>
        <Slot>{SideIcons.fx}</Slot>
        <Slot>{SideIcons.ring}</Slot>
        <SideRule />
        <Slot>{SideIcons.wave}</Slot>
        <Slot><Rsi>RSI</Rsi></Slot>
        <Slot><BigS>S</BigS></Slot>
        <Slot>{SideIcons.move}</Slot>
        <Slot>{SideIcons.pencil}</Slot>
        <SideRule />
        <Slot><FnBox>FS</FnBox></Slot>
        <Slot>{SideIcons.refresh}</Slot>
        {['1', '5', '15', '30', '60'].map(n => <Slot key={n}>{n}</Slot>)}
        <Slot $cjk $on>日</Slot>
        <Slot $cjk>周</Slot>
        <Slot $cjk>月</Slot>
        <Slot>N</Slot>
      </Sidebar>
    </Work>

    <Taskbar>
      <Start><WinLogo /></Start>
      <SearchBox><Magnifier />在这里输入你要搜索的内容</SearchBox>
      <TaskBtn><TaskView /></TaskBtn>
      <TaskBtn $open><Edge /></TaskBtn>
      <TaskBtn $open><Netdisk /></TaskBtn>
      <TaskBtn $open><Folder /></TaskBtn>
      <TaskBtn $open><Wechat /></TaskBtn>
      <TaskBtn $w={46} $open $bg="#324a54"><TdxLogo size={24} /></TaskBtn>
      <TaskBtn $open $bg="#41575f"><Avatar /></TaskBtn>
      <Tray>
        <TraySlot $w={44}><News /></TraySlot>
        <TraySlot $w={22}><Caret /></TraySlot>
        <TraySlot $w={24}><Penguin /></TraySlot>
        <TraySlot $w={26}><Battery /></TraySlot>
        <TraySlot $w={24}><Speaker /></TraySlot>
        <TraySlot $w={24}><Wifi /></TraySlot>
        <TraySlot $w={23}>中</TraySlot>
        <TraySlot $w={35}><SogouS /></TraySlot>
        <TrayClock>17:08<br />2022/1/21</TrayClock>
        <TraySlot $w={46}><Notify /></TraySlot>
      </Tray>
    </Taskbar>

    <Watermark>股海明灯</Watermark>
  </Page>
);

export default App;
